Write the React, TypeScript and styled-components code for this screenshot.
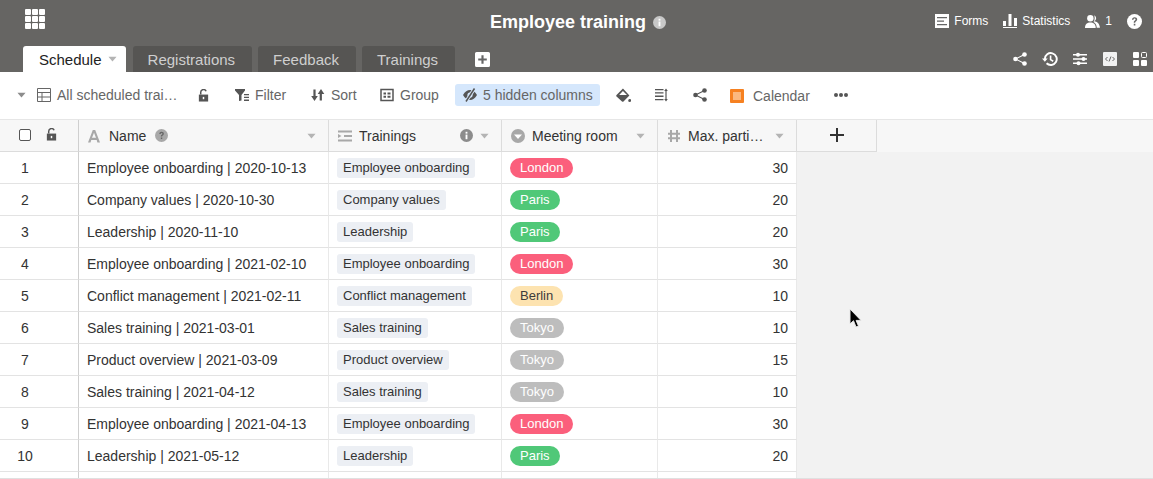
import React from "react";
import styled, { createGlobalStyle } from "styled-components";

const GlobalStyle = createGlobalStyle`
    html, body {
        margin: 0;
        height: 100%;
        overflow: hidden;
        background: #fff;
        font-family: "Liberation Sans", Arial, sans-serif;
    }
`;

type Room = "London" | "Paris" | "Berlin" | "Tokyo";

type RowModel = {
    name: string;
    date: string;
    room: Room;
    max: number;
};

const rows: RowModel[] = [
    { name: "Employee onboarding", date: "2020-10-13", room: "London", max: 30 },
    { name: "Company values", date: "2020-10-30", room: "Paris", max: 20 },
    { name: "Leadership", date: "2020-11-10", room: "Paris", max: 20 },
    { name: "Employee onboarding", date: "2021-02-10", room: "London", max: 30 },
    { name: "Conflict management", date: "2021-02-11", room: "Berlin", max: 10 },
    { name: "Sales training", date: "2021-03-01", room: "Tokyo", max: 10 },
    { name: "Product overview", date: "2021-03-09", room: "Tokyo", max: 15 },
    { name: "Sales training", date: "2021-04-12", room: "Tokyo", max: 10 },
    { name: "Employee onboarding", date: "2021-04-13", room: "London", max: 30 },
    { name: "Leadership", date: "2021-05-12", room: "Paris", max: 20 },
];

const roomColors: Record<Room, { bg: string; fg: string }> = {
    London: { bg: "#fb5f7c", fg: "#ffffff" },
    Paris: { bg: "#50c878", fg: "#ffffff" },
    Berlin: { bg: "#fde3b0", fg: "#3c3c3c" },
    Tokyo: { bg: "#bdbdbd", fg: "#ffffff" },
};

const Icon = ({ size = 14, color = "currentColor", children }: { size?: number; color?: string; children: React.ReactNode }) => (
    <svg width={size} height={size} viewBox="0 0 14 14" fill={color} style={{ flex: "none", display: "block" }}>
        {children}
    </svg>
);

const Caret = ({ color = "#b4b4b4" }: { color?: string }) => (
    <svg width="9" height="6" viewBox="0 0 10 6" fill={color} style={{ flex: "none", display: "block" }}>
        <path d="M0.5 0.5h9L5 5.8z" />
    </svg>
);

const InfoIcon = ({ color = "#9a9a9a", size = 13 }: { color?: string; size?: number }) => (
    <Icon size={size}>
        <circle cx="7" cy="7" r="7" fill={color} />
        <rect x="6" y="6" width="2" height="5" fill="#fff" />
        <rect x="6" y="3" width="2" height="2" fill="#fff" />
    </Icon>
);

const QuestionIcon = ({ color, size }: { color: string; size: number }) => (
    <Icon size={size}>
        <circle cx="7" cy="7" r="7" fill={color} />
        <path d="M4.6 5.3C4.7 3.8 5.7 3 7.1 3c1.4 0 2.4.8 2.4 2 0 1-.5 1.5-1.2 2-.5.3-.6.5-.6 1.1H6.3c0-1 .2-1.5 1-2 .5-.4.7-.6.7-1 0-.5-.4-.8-.9-.8-.6 0-1 .4-1 1zM6.3 9.2h1.5v1.6H6.3z" fill="#666" />
    </Icon>
);

const ShareIcon = ({ color }: { color: string }) => (
    <Icon size={14} color={color}>
        <circle cx="2.500" cy="7" r="2.300" />
        <circle cx="11.500" cy="2.500" r="2.300" />
        <circle cx="11.500" cy="11.500" r="2.300" />
        <path d="M2.500 7l9-4.500M2.500 7l9 4.500" stroke={color} strokeWidth="1.100" fill="none" />
    </Icon>
);

const LockOpenIcon = ({ color }: { color: string }) => (
    <Icon size={13} color={color}>
        <path d="M2 6h10v7.500H2z" />
        <path d="M4 6V3.500a3 3 0 0 1 5.800-1" fill="none" stroke={color} strokeWidth="1.600" />
        <rect x="6.200" y="8.500" width="1.600" height="2.500" fill="#fff" />
    </Icon>
);

export default function App() {
    return (
        <Page>
            <GlobalStyle />
            <TopBar>
                <TitleRow>
                    <AppGrid>
                        {Array.from({ length: 9 }).map((_, i) => <AppCell key={i} />)}
                    </AppGrid>
                    <Title>
                        Employee training
                        <InfoIcon color="#c8c8c8" />
                    </Title>
                    <TopActions>
                        <TopAction>
                            <Icon size={14} color="#fff">
                                <path d="M0 0h14v14H0z" />
                                <path d="M2 3h10v1.200H2zM2 6.500h7v1.200H2zM2 10h10v1.200H2z" fill="#666" />
                            </Icon>
                            Forms
                        </TopAction>
                        <TopAction>
                            <Icon size={14} color="#fff">
                                <path d="M0 7h3v5H0zM5.500 0h3v12h-3zM11 4h3v8h-3zM0 13h14v1H0z" />
                            </Icon>
                            Statistics
                        </TopAction>
                        <TopAction>
                            <Icon size={15} color="#fff">
                                <circle cx="5" cy="4" r="3" />
                                <path d="M0 13c0-3.500 2-5 5-5s5 1.500 5 5z" />
                                <path d="M8.500 1.200a3 3 0 0 1 0 5.600c2.800.4 5 2 5.500 6h-3c-.2-2.500-1.200-4.300-3-5.300 1.300-2 1.300-4.500.5-6.300z" />
                            </Icon>
                            1
                        </TopAction>
                        <QuestionIcon color="#fff" size={15} />
                    </TopActions>
                </TitleRow>
                <TabRow>
                    <Tab $active>
                        Schedule
                        <Caret />
                    </Tab>
                    <Tab>Registrations</Tab>
                    <Tab>Feedback</Tab>
                    <Tab>Trainings</Tab>
                    <AddTab>
                        <Icon size={15} color="#fff">
                            <path d="M1.500 0h11A1.500 1.500 0 0 1 14 1.500v11a1.500 1.500 0 0 1-1.500 1.500h-11A1.500 1.500 0 0 1 0 12.500v-11A1.500 1.500 0 0 1 1.500 0z" />
                            <path d="M6 3h2v3h3v2H8v3H6V8H3V6h3z" fill="#666" />
                        </Icon>
                    </AddTab>
                    <TabTools>
                        <ToolSlot><ShareIcon color="#fff" /></ToolSlot>
                        <ToolSlot>
                            <Icon size={16} color="#fff">
                                <path d="M2.500 7a5.200 5.200 0 1 1 1.500 3.700" fill="none" stroke="#fff" strokeWidth="1.700" />
                                <path d="M0 6.500h5L2.500 9.500z" />
                                <path d="M7.500 4v3.500l2.300 1.500" fill="none" stroke="#fff" strokeWidth="1.400" />
                            </Icon>
                        </ToolSlot>
                        <ToolSlot>
                            <Icon size={14} color="#fff">
                                <path d="M0 2h14v1.400H0zM0 6.300h14v1.400H0zM0 10.600h14V12H0z" />
                                <circle cx="5" cy="2.700" r="2" />
                                <circle cx="10.500" cy="7" r="2" />
                                <circle cx="5.500" cy="11.300" r="2" />
                            </Icon>
                        </ToolSlot>
                        <ToolSlot>
                            <Icon size={14} color="#fff">
                                <rect width="14" height="14" rx="1" fill="#f2f2f2" />
                                <path d="M4.500 5L2.500 7l2 2M9.500 5l2 2-2 2M8 4.500L6 9.500" fill="none" stroke="#666" strokeWidth="1" />
                            </Icon>
                        </ToolSlot>
                        <ToolSlot>
                            <Icon size={14} color="#fff">
                                <rect width="6" height="6" rx="1" />
                                <rect x="8.500" y=".5" width="5" height="5" rx="1" fill="none" stroke="#fff" />
                                <rect y="8" width="6" height="6" rx="1" />
                                <rect x="8" y="8" width="6" height="6" rx="1" />
                            </Icon>
                        </ToolSlot>
                    </TabTools>
                </TabRow>
            </TopBar>

            <Toolbar>
                <ViewPicker>
                    <Caret color="#8c8c8c" />
                    <Icon size={14} color="#666">
                        <path d="M.5.5h13v13H.5zM.5 4.500h13M.5 9h13M5 4.500v9" fill="none" stroke="#666" />
                    </Icon>
                    All scheduled trai…
                </ViewPicker>
                <LockSlot>
                    <LockOpenIcon color="#555" />
                </LockSlot>
                <ToolItem $width={76}>
                    <Icon size={14} color="#555">
                        <path d="M0 1h10v1.500L6.500 7v5.500L4 13V7L0 2.500z" />
                        <path d="M9 6h5v1.300H9zM9 8.800h5v1.300H9zM9 11.600h5v1.300H9z" />
                    </Icon>
                    Filter
                </ToolItem>
                <ToolItem $width={69}>
                    <Icon size={14} color="#555">
                        <path d="M2.400 1.500h2.200V8H6.800L3.500 13 .2 8h2.200zM8.700 12.500V6H6.700L10 1l3.300 5h-2.400v6.500z" />
                    </Icon>
                    Sort
                </ToolItem>
                <ToolItem $width={75}>
                    <Icon size={14} color="#555">
                        <path d="M1 1.500h12v11H1z" fill="none" stroke="#555" strokeWidth="1.500" />
                        <path d="M3.500 4.500h2.500v2H3.500zM7.500 4.500h3v2h-3zM3.500 7.800h2.500v2H3.500zM7.500 7.800h3v2h-3z" />
                    </Icon>
                    Group
                </ToolItem>
                <HiddenColumns>
                    <Icon size={14} color="#555">
                        <path d="M0 7c2-3.500 4.300-5 7-5s5 1.500 7 5c-2 3.500-4.300 5-7 5s-5-1.500-7-5z" />
                        <circle cx="7" cy="7" r="2.600" fill="#d5e7fc" />
                        <path d="M11.500 .5L3 13.500" stroke="#d5e7fc" strokeWidth="3.400" />
                        <path d="M11.500 .5L3 13.500" stroke="#555" strokeWidth="1.500" />
                    </Icon>
                    5 hidden columns
                </HiddenColumns>
                <IconSlot $width={47}>
                    <Icon size={15} color="#555">
                        <path d="M6.500 .5l6 6.500-5.500 5.500a1 1 0 0 1-1.400 0L.5 7.900a1 1 0 0 1 0-1.400z" />
                        <path d="M6.500 2.800L3 6.500h7.200z" fill="#fff" />
                        <circle cx="12.800" cy="11.600" r="1.400" />
                    </Icon>
                </IconSlot>
                <IconSlot $width={29}>
                    <Icon size={14} color="#555">
                        <path d="M0 1h8.500v1.300H0zM0 4.300h8.500v1.300H0zM0 7.600h8.500v1.300H0zM0 10.900h8.500v1.300H0z" />
                        <path d="M11 .5l1.800 2.500H11.600v8h1.200L11 13.500 9.200 11h1.200V3H9.200z" />
                    </Icon>
                </IconSlot>
                <IconSlot $width={47}>
                    <ShareIcon color="#555" />
                </IconSlot>
                <CalendarItem>
                    <CalendarBadge><CalendarInner /></CalendarBadge>
                    Calendar
                </CalendarItem>
                <MoreDots>
                    <Dot /><Dot /><Dot />
                </MoreDots>
            </Toolbar>

            <Sheet>
                <Grid>
                    <HeadRow>
                        <IndexHead>
                            <Checkbox />
                            <LockOpenIcon color="#555" />
                        </IndexHead>
                        <HeadCell $width={250}>
                            <Icon size={14} color="#a8a8a8">
                                <path d="M4.800 1h2.400L12 13.500H9.400L8.700 11H3.300l-.8 2.500H0zM4 8.800h4L6 3.800z" />
                            </Icon>
                            <HeadLabel>Name</HeadLabel>
                            <InfoGlyph><QuestionIcon color="#a8a8a8" size={13} /></InfoGlyph>
                            <HeadCaret><Caret /></HeadCaret>
                        </HeadCell>
                        <HeadCell $width={173}>
                            <Icon size={14} color="#a8a8a8">
                                <path d="M0 1.500h14v2H0zM6 6h8v2H6zM0 10.500h14v2H0zM0 5l3.500 2L0 9z" />
                            </Icon>
                            <HeadLabel>Trainings</HeadLabel>
                            <HeadCaret>
                                <InfoIcon color="#8c8c8c" />
                                <Caret />
                            </HeadCaret>
                        </HeadCell>
                        <HeadCell $width={156}>
                            <Icon size={14}>
                                <circle cx="7" cy="7" r="7" fill="#a8a8a8" />
                                <path d="M3 5.500h8L7 10z" fill="#fff" />
                            </Icon>
                            <HeadLabel>Meeting room</HeadLabel>
                            <HeadCaret><Caret /></HeadCaret>
                        </HeadCell>
                        <HeadCell $width={139}>
                            <Icon size={14}>
                                <path d="M4 1v12M10 1v12M1 4.700h12M1 9.300h12" stroke="#a8a8a8" strokeWidth="2" fill="none" />
                            </Icon>
                            <HeadLabel>Max. parti…</HeadLabel>
                            <HeadCaret><Caret /></HeadCaret>
                        </HeadCell>
                        <AddColumn>
                            <Icon size={14} color="#333">
                                <path d="M6 0h2v6h6v2H8v6H6V8H0V6h6z" />
                            </Icon>
                        </AddColumn>
                    </HeadRow>
                    {rows.map((row, i) => (
                        <Row key={i}>
                            <IndexCell>{i + 1}</IndexCell>
                            <Cell $width={250}>{row.name} | {row.date}</Cell>
                            <Cell $width={173}><LinkTag>{row.name}</LinkTag></Cell>
                            <Cell $width={156}>
                                <RoomPill $room={row.room}>{row.room}</RoomPill>
                            </Cell>
                            <NumberCell>{row.max}</NumberCell>
                        </Row>
                    ))}
                    <Row>
                        <IndexCell />
                        <Cell $width={250} />
                        <Cell $width={173} />
                        <Cell $width={156} />
                        <NumberCell />
                    </Row>
                </Grid>
                <Cursor>
                    <svg width="14" height="22" viewBox="0 0 14 22">
                        <path d="M1 1v15l3.500-3.300L7 19l2.500-1-2.400-5.600H12z" fill="#000" stroke="#e6e6e6" strokeWidth="1" />
                    </svg>
                </Cursor>
            </Sheet>
        </Page>
    );
}

const Page = styled.div`
    width: 1153px;
    height: 479px;
    overflow: hidden;
    display: flex;
    flex-direction: column;
`;

const TopBar = styled.div`
    height: 72px;
    background: #666563;
    flex: none;
    display: flex;
    flex-direction: column;
    justify-content: space-between;
`;

const TitleRow = styled.div`
    position: relative;
    height: 46px;
    padding: 9px 11px 0 25px;
    box-sizing: border-box;
    display: flex;
    align-items: flex-start;
    justify-content: space-between;
`;

const AppGrid = styled.div`
    display: grid;
    grid-template-columns: repeat(3, 6px);
    grid-auto-rows: 6px;
    gap: 1px;
`;

const AppCell = styled.div`
    background: #fff;
    border-radius: 1px;
`;

const Title = styled.div`
    position: absolute;
    left: 490px;
    top: 12px;
    display: flex;
    align-items: center;
    gap: 7px;
    font-size: 18px;
    line-height: 21px;
    font-weight: 700;
    color: #fff;
`;

const TopActions = styled.div`
    display: flex;
    align-items: center;
    gap: 15px;
    height: 14px;
    margin-top: 5px;
`;

const TopAction = styled.div`
    display: flex;
    align-items: center;
    gap: 5px;
    font-size: 12px;
    color: #fff;
`;

const TabRow = styled.div`
    display: flex;
    align-items: flex-end;
    height: 26px;
    padding: 0 6px 0 23px;
`;

const Tab = styled.div<{ $active?: boolean }>`
    height: 26px;
    display: flex;
    align-items: center;
    gap: 6px;
    padding: ${(p) => (p.$active ? "0 9px 0 16px" : "0 17px 0 15px")};
    margin-right: ${(p) => (p.$active ? "7px" : "6px")};
    border-radius: 3px 3px 0 0;
    font-size: 15px;
    background: ${(p) => (p.$active ? "#fff" : "#565553")};
    color: ${(p) => (p.$active ? "#222" : "#cfcfcf")};
`;

const AddTab = styled.div`
    height: 26px;
    display: flex;
    align-items: center;
    margin-left: 14px;
`;

const TabTools = styled.div`
    margin-left: auto;
    height: 26px;
    display: flex;
    align-items: center;
    gap: 15px;
`;

const ToolSlot = styled.div`
    width: 15px;
    display: flex;
    justify-content: center;
`;

const Toolbar = styled.div`
    height: 46px;
    padding: 0 0 1px 17px;
    box-sizing: content-box;
    flex: none;
    display: flex;
    align-items: center;
    border-bottom: 1px solid #e6e6e6;
    font-size: 14px;
    color: #666;
`;

const ViewPicker = styled.div`
    width: 180px;
    display: flex;
    align-items: center;
    gap: 6px;
    white-space: nowrap;

    svg:first-child {
        margin-right: 5px;
    }
`;

const LockSlot = styled.div`
    width: 38px;
    display: flex;
`;

const ToolItem = styled.div<{ $width: number }>`
    width: ${(p) => p.$width}px;
    box-sizing: border-box;
    display: flex;
    align-items: center;
    gap: 6px;
`;

const HiddenColumns = styled.div`
    height: 22px;
    width: 145px;
    box-sizing: border-box;
    padding: 0 0 0 8px;
    display: flex;
    align-items: center;
    gap: 6px;
    white-space: nowrap;
    background: #d5e7fc;
    border-radius: 3px;
`;

const IconSlot = styled.div<{ $width: number }>`
    width: ${(p) => p.$width}px;
    display: flex;
    justify-content: center;
`;

const CalendarItem = styled.div`
    display: flex;
    align-items: center;
    gap: 9px;
    margin-left: 7px;
    padding-top: 2px;
`;

const CalendarBadge = styled.div`
    width: 14px;
    height: 14px;
    background: #f68121;
    border-radius: 1px;
    display: flex;
    align-items: center;
    justify-content: center;
`;

const CalendarInner = styled.div`
    width: 8px;
    height: 8px;
    background: #fbb87f;
`;

const MoreDots = styled.div`
    display: flex;
    gap: 1px;
    margin-left: 24px;
`;

const Dot = styled.div`
    width: 4px;
    height: 4px;
    border-radius: 50%;
    background: #555;
`;

const Sheet = styled.div`
    position: relative;
    flex: 1;
    background: #f2f2f2;
    border-bottom: 1px solid #e0e0e0;
    overflow: hidden;
`;

const Grid = styled.div`
    display: flex;
    flex-direction: column;
`;

const HeadRow = styled.div`
    height: 32px;
    box-sizing: border-box;
    display: flex;
    background: #f7f7f7;
`;

const IndexHead = styled.div`
    width: 79px;
    flex: none;
    box-sizing: border-box;
    padding: 0 20px 2px 19px;
    display: flex;
    align-items: center;
    justify-content: space-between;
    border-right: 1px solid #cfcfcf;
    border-bottom: 1px solid #dcdcdc;
`;

const Checkbox = styled.div`
    width: 10px;
    height: 10px;
    border: 1px solid #555;
    border-radius: 2px;
    background: #fff;
`;

const HeadCell = styled.div<{ $width: number }>`
    width: ${(p) => p.$width}px;
    flex: none;
    box-sizing: border-box;
    padding: 0 12px 0 9px;
    display: flex;
    align-items: center;
    border-right: 1px solid #dcdcdc;
    border-bottom: 1px solid #dcdcdc;
`;

const HeadLabel = styled.span`
    margin-left: 7px;
    font-size: 14px;
    color: #333;
    white-space: nowrap;
`;

const InfoGlyph = styled.span`
    margin-left: 9px;
`;

const HeadCaret = styled.span`
    margin-left: auto;
    display: flex;
    align-items: center;
    gap: 7px;
`;

const AddColumn = styled.div`
    width: 80px;
    box-sizing: border-box;
    display: flex;
    align-items: center;
    justify-content: center;
    padding-bottom: 2px;
    border-right: 1px solid #dcdcdc;
    border-bottom: 1px solid #dcdcdc;
`;

const Row = styled.div`
    height: 32px;
    width: 797px;
    flex: none;
    box-sizing: border-box;
    display: flex;
    background: #fff;
`;

const IndexCell = styled.div`
    width: 79px;
    flex: none;
    box-sizing: border-box;
    padding-right: 28px;
    text-align: center;
    line-height: 32px;
    font-size: 14px;
    color: #333;
    border-right: 1px solid #cfcfcf;
    border-bottom: 1px solid #e3e3e3;
`;

const Cell = styled.div<{ $width: number }>`
    width: ${(p) => p.$width}px;
    flex: none;
    box-sizing: border-box;
    padding-left: 8px;
    display: flex;
    align-items: center;
    font-size: 14px;
    color: #333;
    white-space: nowrap;
    border-right: 1px solid #e9e9e9;
    border-bottom: 1px solid #e3e3e3;
`;

const NumberCell = styled.div`
    width: 139px;
    flex: none;
    box-sizing: border-box;
    padding-right: 8px;
    text-align: right;
    line-height: 32px;
    font-size: 14px;
    color: #333;
    border-right: 1px solid #e9e9e9;
    border-bottom: 1px solid #e3e3e3;
`;

const LinkTag = styled.span`
    height: 20px;
    line-height: 19px;
    padding: 0 6px;
    border-radius: 3px;
    background: #eceff4;
    font-size: 13px;
    color: #333;
`;

const RoomPill = styled.span<{ $room: Room }>`
    height: 20px;
    line-height: 19px;
    padding: 0 10px;
    border-radius: 10px;
    font-size: 13px;
    background: ${(p) => roomColors[p.$room].bg};
    color: ${(p) => roomColors[p.$room].fg};
`;

const Cursor = styled.div`
    position: absolute;
    left: 849px;
    top: 188px;
    line-height: 0;
`;
